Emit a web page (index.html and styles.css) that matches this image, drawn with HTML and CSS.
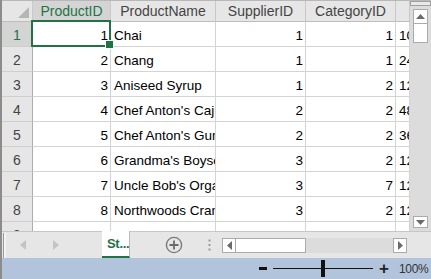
FILE: index.html
```html
<!DOCTYPE html>
<html>
<head>
<meta charset="utf-8">
<link rel="stylesheet" href="styles.css">
</head>
<body>
<div class="app">
  <div class="main">
    <div class="sheet">
      <div class="hc corner"><span class="tri"></span></div>
      <div class="hc sel">ProductID</div>
      <div class="hc">ProductName</div>
      <div class="hc">SupplierID</div>
      <div class="hc">CategoryID</div>
      <div class="hc"></div>

      <div class="rh sel">1</div><div class="c n active">1</div><div class="c">Chai</div><div class="c n">1</div><div class="c n">1</div><div class="c">10 boxes x 20 bags</div>
      <div class="rh">2</div><div class="c n">2</div><div class="c">Chang</div><div class="c n">1</div><div class="c n">1</div><div class="c">24 - 12 oz bottles</div>
      <div class="rh">3</div><div class="c n">3</div><div class="c">Aniseed Syrup</div><div class="c n">1</div><div class="c n">2</div><div class="c">12 - 550 ml bottles</div>
      <div class="rh">4</div><div class="c n">4</div><div class="c">Chef Anton's Cajun Seasoning</div><div class="c n">2</div><div class="c n">2</div><div class="c">48 - 6 oz jars</div>
      <div class="rh">5</div><div class="c n">5</div><div class="c">Chef Anton's Gumbo Mix</div><div class="c n">2</div><div class="c n">2</div><div class="c">36 boxes</div>
      <div class="rh">6</div><div class="c n">6</div><div class="c">Grandma's Boysenberry Spread</div><div class="c n">3</div><div class="c n">2</div><div class="c">12 - 8 oz jars</div>
      <div class="rh">7</div><div class="c n">7</div><div class="c">Uncle Bob's Organic Dried Pears</div><div class="c n">3</div><div class="c n">7</div><div class="c">12 - 1 lb pkgs.</div>
      <div class="rh">8</div><div class="c n">8</div><div class="c">Northwoods Cranberry Sauce</div><div class="c n">3</div><div class="c n">2</div><div class="c">12 - 12 oz jars</div>
      <div class="rh">9</div><div class="c n">9</div><div class="c">Mishi Kobe Niku</div><div class="c n">4</div><div class="c n">6</div><div class="c">18 - 500 g pkgs.</div>
    </div>
    <div class="vscroll">
      <div class="split"></div>
      <div class="vbox">
        <div class="vbtn"><svg width="9" height="5" viewBox="0 0 9 5"><path d="M0 5 L4.5 0 L9 5 Z" fill="#6a6a6a"/></svg></div>
        <div class="vthumb"></div>
      </div>
      <div class="vtrack"></div>
      <div class="vbtn down"><svg width="9" height="5" viewBox="0 0 9 5"><path d="M0 0 L4.5 5 L9 0 Z" fill="#6a6a6a"/></svg></div>
    </div>
  </div>
  <div class="tabbar">
    <div class="nav">
      <span class="divider"></span>
      <svg class="arrow" width="6" height="10" viewBox="0 0 6 10"><path d="M6 0 L0 5 L6 10 Z" fill="#c4c4c4"/></svg>
      <svg class="arrow" width="6" height="10" viewBox="0 0 6 10"><path d="M0 0 L6 5 L0 10 Z" fill="#c4c4c4"/></svg>
    </div>
    <div class="tab">St...</div>
    <div class="tools">
      <svg class="plus" width="18" height="18" viewBox="0 0 18 18"><circle cx="9" cy="9" r="7.6" fill="none" stroke="#7b7b7b" stroke-width="1.4"/><path d="M9 4.5 V13.5 M4.5 9 H13.5" stroke="#6a6a6a" stroke-width="1.8"/></svg>
      <svg class="dots" width="3" height="12" viewBox="0 0 3 12"><rect x="0.5" y="0.5" width="2" height="2" fill="#9a9a9a"/><rect x="0.5" y="5" width="2" height="2" fill="#9a9a9a"/><rect x="0.5" y="9.5" width="2" height="2" fill="#9a9a9a"/></svg>
    </div>
    <div class="hscroll">
      <div class="hbtn"><svg width="5" height="9" viewBox="0 0 5 9"><path d="M5 0 L0 4.5 L5 9 Z" fill="#6a6a6a"/></svg></div>
      <div class="hthumb"></div>
      <div class="htrack"></div>
      <div class="hbtn"><svg width="5" height="9" viewBox="0 0 5 9"><path d="M0 0 L5 4.5 L0 9 Z" fill="#6a6a6a"/></svg></div>
    </div>
  </div>
  <div class="status">
    <span class="minus"></span>
    <div class="slider"><span class="knob"></span></div>
    <span class="plusz">+</span>
    <span class="pct">100%</span>
  </div>
</div>
</body>
</html>
```
FILE: styles.css
```css
* { box-sizing: border-box; }
html, body { margin: 0; padding: 0; }
body {
  width: 431px;
  height: 279px;
  overflow: hidden;
  background: #ffffff;
  font-family: "Liberation Sans", Arial, sans-serif;
}
.app {
  width: 431px;
  height: 279px;
  display: flex;
  flex-direction: column;
  border-left: 2px solid #8c8c8c;
}
.main {
  height: 231px;
  display: flex;
  border-top: 1px solid #b8b8b8;
}
.sheet {
  width: 408px;
  overflow: hidden;
  display: grid;
  grid-template-columns: 31px 78px 105px 90px 90px 14px;
  grid-template-rows: 21px repeat(9, 25px);
  font-size: 14px;
  color: #000;
}
.hc {
  background: #e6e6e6;
  border-right: 1px solid #c8c8c8;
  border-bottom: 1px solid #bdbdbd;
  color: #444;
  text-align: center;
  line-height: 20px;
  white-space: nowrap;
  overflow: hidden;
}
.hc.sel { background: #d4d4d4; color: #217346; }
.corner { position: relative; }
.tri {
  position: absolute;
  right: 3px;
  bottom: 3px;
  width: 0;
  height: 0;
  border-left: 11px solid transparent;
  border-bottom: 11px solid #b5b5b5;
}
.rh {
  background: #e6e6e6;
  border-right: 1px solid #adadad;
  border-bottom: 1px solid #cfcfcf;
  color: #444;
  text-align: center;
  line-height: 25px;
  padding-top: 1px;
}
.rh.sel { background: #d4d4d4; color: #217346; }
.c {
  border-right: 1px solid #d4d4d4;
  border-bottom: 1px solid #d4d4d4;
  font-size: 13.5px;
  line-height: 25px;
  padding: 1px 3px 0 3px;
  white-space: nowrap;
  overflow: hidden;
}
.c.n { text-align: right; padding-right: 2px; }
.c.active { position: relative; overflow: visible; z-index: 2; }
.c.active::after {
  content: "";
  position: absolute;
  left: -2px;
  top: -2px;
  right: -1px;
  bottom: -1px;
  border: 2px solid #217346;
}
.c.active::before {
  content: "";
  position: absolute;
  right: -4px;
  bottom: -3px;
  width: 7px;
  height: 7px;
  background: #217346;
  border: 1px solid #fff;
  z-index: 3;
}
.vscroll {
  width: 21px;
  background: #dcdcdc;
  display: flex;
  flex-direction: column;
  align-items: center;
  padding-bottom: 3px;
}
.split {
  width: 21px;
  height: 5px;
  background: #e9e9e9;
  border: 1px solid #a0a0a0;
  margin-bottom: 3px;
}
.vbox {
  width: 15px;
  border: 1px solid #ababab;
  background: #fff;
}
.vbtn {
  width: 15px;
  height: 13px;
  display: flex;
  align-items: center;
  justify-content: center;
  background: #fff;
}
.vbox .vbtn { width: 13px; border-bottom: 1px solid #ababab; height: 14px; }
.vthumb { height: 18px; }
.vtrack { flex: 1; }
.vbtn.down { border: 1px solid #ababab; height: 12px; }
.tabbar {
  height: 27px;
  background: #e6e6e6;
  border-top: 1px solid #c6c6c6;
  display: flex;
  align-items: stretch;
}
.nav {
  width: 100px;
  display: flex;
  align-items: center;
}
.divider {
  width: 3px;
  height: 25px;
  margin-left: 1px;
  border-left: 1px solid #9a9a9a;
  background: #f2f2f2;
  margin-right: 14px;
}
.arrow { margin-right: 27px; }
.tab {
  width: 28px;
  background: #ffffff;
  border-right: 1px solid #bcbcbc;
  border-bottom: 2px solid #217346;
  color: #217346;
  font-weight: bold;
  font-size: 13px;
  letter-spacing: -0.3px;
  padding-left: 5px;
  line-height: 25px;
  margin-top: -1px;
}
.tools {
  width: 90px;
  display: flex;
  align-items: center;
  padding-left: 35px;
}
.dots { margin-left: 25px; }
.hscroll {
  display: flex;
  align-items: center;
  margin-left: 2px;
}
.hbtn {
  width: 14px;
  height: 15px;
  border: 1px solid #ababab;
  background: #fff;
  display: flex;
  align-items: center;
  justify-content: center;
}
.hthumb {
  width: 70px;
  height: 15px;
  background: #fff;
  border: 1px solid #ababab;
  border-left: none;
}
.htrack {
  width: 87px;
  height: 15px;
  background: #dcdcdc;
}
.status {
  height: 21px;
  background: #b2c4dc;
  display: flex;
  align-items: center;
  padding-left: 257px;
  color: #222;
}
.minus {
  width: 8px;
  height: 3px;
  background: #111;
  margin-right: 6px;
}
.slider {
  width: 100px;
  height: 1px;
  background: #111;
  position: relative;
}
.knob {
  position: absolute;
  left: 48px;
  top: -8px;
  width: 4px;
  height: 17px;
  background: #111;
}
.plusz {
  font-size: 17px;
  font-weight: bold;
  margin-left: 6px;
  line-height: 17px;
}
.pct {
  font-size: 12px;
  margin-left: 10px;
  color: #333;
  letter-spacing: -0.3px;
}
```
